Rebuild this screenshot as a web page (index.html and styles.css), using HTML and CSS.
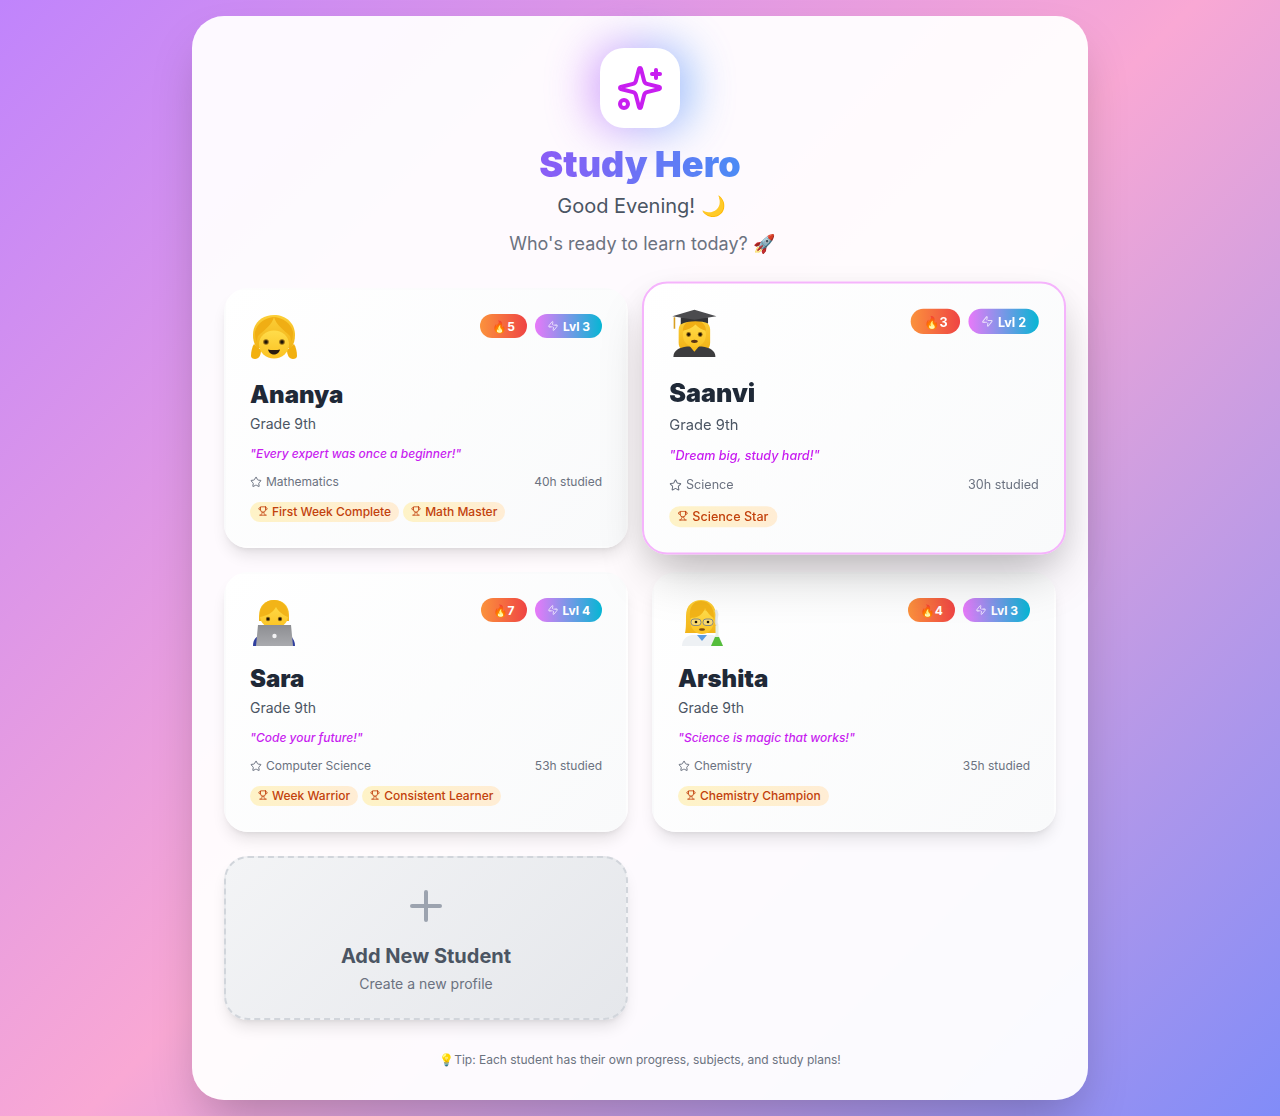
FILE: index.html
```html
<!DOCTYPE html>
<html lang="en">
<head>
<meta charset="utf-8">
<title>Study Hero</title>
<link rel="stylesheet" href="styles.css">
</head>
<body>
<svg class="defs" width="0" height="0" aria-hidden="true">
  <defs>
    <linearGradient id="g-skin" x1="0" y1="0" x2="0" y2="1"><stop offset="0" stop-color="#ffdc4a"/><stop offset="1" stop-color="#fbc222"/></linearGradient>
    <linearGradient id="g-hair" x1="0" y1="0" x2="0" y2="1"><stop offset="0" stop-color="#fccf38"/><stop offset="1" stop-color="#f2b418"/></linearGradient>
    <linearGradient id="g-lap" x1="0" y1="0" x2="0" y2="1"><stop offset="0" stop-color="#8d8e92"/><stop offset="1" stop-color="#a9aaae"/></linearGradient>
    <symbol id="i-zap" viewBox="0 0 24 24"><path d="M6.7 13.7H4a1 1 0 0 1-.8-1.6l7-8.8c.6-.8 1.8-.2 1.6.8L10.9 9"/><path d="M17.3 10.3H20a1 1 0 0 1 .8 1.6l-7 8.8c-.6.8-1.8.2-1.6-.8l.9-4.9"/><path d="M5 13.7h5.6"/><path d="M13.4 10.3H19"/></symbol>
    <symbol id="i-star" viewBox="0 0 24 24"><path d="M11.525 2.295a.53.53 0 0 1 .95 0l2.31 4.679a2.123 2.123 0 0 0 1.595 1.16l5.166.756a.53.53 0 0 1 .294.904l-3.736 3.638a2.123 2.123 0 0 0-.611 1.878l.882 5.14a.53.53 0 0 1-.771.56l-4.618-2.428a2.122 2.122 0 0 0-1.973 0L6.396 21.01a.53.53 0 0 1-.77-.56l.881-5.139a2.122 2.122 0 0 0-.611-1.879L2.16 9.795a.53.53 0 0 1 .294-.906l5.165-.755a2.122 2.122 0 0 0 1.597-1.16z"/></symbol>
    <symbol id="i-trophy" viewBox="0 0 24 24"><path d="M6 9H4.5a2.5 2.5 0 0 1 0-5H6"/><path d="M18 9h1.5a2.5 2.5 0 0 0 0-5H18"/><path d="M4 22h16"/><path d="M10 14.66V17c0 .55-.47.98-.97 1.21C7.85 18.75 7 20.24 7 22"/><path d="M14 14.66V17c0 .55.47.98.97 1.21C16.15 18.75 17 20.24 17 22"/><path d="M18 2H6v7a6 6 0 0 0 12 0V2Z"/></symbol>
  </defs>
</svg>
<main class="panel">
  <header class="hero">
    <div class="logo-wrap">
      <div class="logo">
        <svg viewBox="0 0 24 24" width="48" height="48" fill="none" stroke="#c81ef0" stroke-width="2" stroke-linecap="round" stroke-linejoin="round"><path d="M9.937 15.5A2 2 0 0 0 8.5 14.063l-6.135-1.582a.5.5 0 0 1 0-.962L8.5 9.936A2 2 0 0 0 9.937 8.5l1.582-6.135a.5.5 0 0 1 .963 0L14.063 8.5A2 2 0 0 0 15.5 9.937l6.135 1.581a.5.5 0 0 1 0 .964L15.5 14.063a2 2 0 0 0-1.437 1.437l-1.582 6.135a.5.5 0 0 1-.963 0z"/><path d="M20 3v4"/><path d="M22 5h-4"/><circle cx="4" cy="20" r="2"/></svg>
      </div>
    </div>
    <h1 class="title">Study Hero</h1>
    <p class="greet">Good Evening! 🌙</p>
    <p class="sub">Who's ready to learn today? 🚀</p>
  </header>
  <section class="grid">
    <article class="card">
      <div class="top">
        <svg class="avatar" viewBox="0 0 48 48">
          <path d="M4 30c-2 3-3 8-3 12 0 2 2 3 4 3 4 0 6-4 6-9z" fill="#f2b010"/>
          <path d="M44 30c2 3 3 8 3 12 0 2-2 3-4 3-4 0-6-4-6-9z" fill="#f2b010"/>
          <path d="M24 1C12 1 3 9 3 21c0 5 1 9 4 13h34c3-4 4-8 4-13C45 9 36 1 24 1z" fill="url(#g-hair)"/>
          <ellipse cx="24" cy="30.500" rx="15" ry="14" fill="url(#g-skin)"/>
          <path d="M24 3c-2 8-10 13-16 19-1 3-1 5-1 6-2-4-2-7-2-10C7 9 15 4 24 3c9 1 17 6 19 15 0 3 0 6-2 10 0-1 0-3-1-6-6-6-14-11-16-19z" fill="#f0ae14"/>
          <circle cx="16" cy="28" r="2.800" fill="#8a6416"/><circle cx="32" cy="28" r="2.800" fill="#8a6416"/>
          <circle cx="16" cy="28" r="1.700" fill="#1c1408"/><circle cx="32" cy="28" r="1.700" fill="#1c1408"/>
          <path d="M18 35.500c3 .8 9 .8 12 0-.5 3-3.500 5-6 5s-5.500-2-6-5z" fill="#2a1c10"/>
        </svg>
        <div class="badges"><span class="streak">🔥5</span><span class="level"><svg class="ic"><use href="#i-zap"/></svg>Lvl 3</span></div>
      </div>
      <h2 class="name">Ananya</h2><p class="grade">Grade 9th</p>
      <p class="quote">"Every expert was once a beginner!"</p>
      <div class="meta"><span class="subject"><svg class="ic"><use href="#i-star"/></svg>Mathematics</span><span>40h studied</span></div>
      <div class="tags"><span class="tag"><svg class="ic"><use href="#i-trophy"/></svg>First Week Complete</span><span class="tag"><svg class="ic"><use href="#i-trophy"/></svg>Math Master</span></div>
    </article>
    <article class="card active">
      <div class="top">
        <svg class="avatar" viewBox="0 0 48 48">
          <path d="M9 20c0-7 7-10 15-10s15 3 15 10v12c0 3-1 5-2 6H11c-1-1-2-3-2-6z" fill="url(#g-hair)"/>
          <path d="M4 46c0-6 5-9 13-10h14c8 1 13 4 13 10z" fill="#3c3c3e"/>
          <path d="M19 35l5 6 5-6z" fill="#f9bd1c"/>
          <ellipse cx="24" cy="25" rx="11" ry="11.500" fill="url(#g-skin)"/>
          <path d="M13 21c5-1 9-3 12-6 3 3 6 5 10 6 0-6-4-10-11-10s-11 4-11 10z" fill="#f0ae14"/>
          <circle cx="18.500" cy="24.500" r="2.300" fill="#8a6416"/><circle cx="29.500" cy="24.500" r="2.300" fill="#8a6416"/>
          <circle cx="18.500" cy="24.500" r="1.400" fill="#1c1408"/><circle cx="29.500" cy="24.500" r="1.400" fill="#1c1408"/>
          <ellipse cx="24" cy="31" rx="3.200" ry="1.500" fill="#5b3414"/>
          <path d="M11 8h26v6c-6-3-20-3-26 1z" fill="#333335"/>
          <path d="M24 1 45 7 24 10.500 3 7z" fill="#4b4b4e"/>
          <path d="M5 8v11" stroke="#d9a023" stroke-width="1.500" fill="none"/>
        </svg>
        <div class="badges"><span class="streak">🔥3</span><span class="level"><svg class="ic"><use href="#i-zap"/></svg>Lvl 2</span></div>
      </div>
      <h2 class="name">Saanvi</h2><p class="grade">Grade 9th</p>
      <p class="quote">"Dream big, study hard!"</p>
      <div class="meta"><span class="subject"><svg class="ic"><use href="#i-star"/></svg>Science</span><span>30h studied</span></div>
      <div class="tags"><span class="tag"><svg class="ic"><use href="#i-trophy"/></svg>Science Star</span></div>
    </article>
    <article class="card">
      <div class="top">
        <svg class="avatar" viewBox="0 0 48 48">
          <path d="M3 48c0-6 3-10 8-11h26c5 1 8 5 8 11z" fill="#2f3e9e"/>
          <path d="M9 18C9 7 16 2 24 2s15 5 15 15v6H9z" fill="url(#g-hair)"/>
          <ellipse cx="24" cy="18" rx="14" ry="12.500" fill="url(#g-skin)"/>
          <path d="M10 19c6-1 13-4 16-10 2 4 7 8 12 10C39 8 32 2 24 2S9 8 10 19z" fill="#f2b418"/>
          <circle cx="18" cy="21" r="2.200" fill="#8a6416"/><circle cx="30" cy="21" r="2.200" fill="#8a6416"/>
          <circle cx="18" cy="21" r="1.300" fill="#1c1408"/><circle cx="30" cy="21" r="1.300" fill="#1c1408"/>
          <path d="M8 27h33l2 21H6z" fill="url(#g-lap)"/>
          <circle cx="24.500" cy="38" r="2.200" fill="#f2f2f4"/>
        </svg>
        <div class="badges"><span class="streak">🔥7</span><span class="level"><svg class="ic"><use href="#i-zap"/></svg>Lvl 4</span></div>
      </div>
      <h2 class="name">Sara</h2><p class="grade">Grade 9th</p>
      <p class="quote">"Code your future!"</p>
      <div class="meta"><span class="subject"><svg class="ic"><use href="#i-star"/></svg>Computer Science</span><span>53h studied</span></div>
      <div class="tags"><span class="tag"><svg class="ic"><use href="#i-trophy"/></svg>Week Warrior</span><span class="tag"><svg class="ic"><use href="#i-trophy"/></svg>Consistent Learner</span></div>
    </article>
    <article class="card">
      <div class="top">
        <svg class="avatar" viewBox="0 0 48 48">
          <path d="M8 18C8 7 15 2 23 2c9 0 15 6 15 16 0 8 1 13 2 17H7c1-4 1-9 1-17z" fill="url(#g-hair)"/>
          <path d="M4 48c0-6 4-10 10-11h20c6 1 10 5 10 11z" fill="#eef1f4"/>
          <path d="M19 37l5 6 5-6z" fill="#5b9be0"/>
          <ellipse cx="24" cy="24" rx="11.500" ry="12" fill="url(#g-skin)"/>
          <path d="M12 20c7 0 13-3 15-10 2 4 5 8 9 10C36 9 31 3 23 3S11 9 12 20z" fill="#f2b418"/>
          <g fill="#f4f6f8" fill-opacity=".3" stroke="#7d8187" stroke-width=".9"><rect x="13" y="21" width="10" height="6.500" rx="3"/><rect x="25" y="21" width="10" height="6.500" rx="3"/></g>
          <circle cx="18" cy="24" r="1.300" fill="#1c1408"/><circle cx="30" cy="24" r="1.300" fill="#1c1408"/>
          <ellipse cx="24" cy="31.500" rx="3" ry="1.200" fill="#7a4a14"/>
          <path d="M38 13c3 5-2 8 1 14" stroke="#dfe3e6" stroke-width="3" fill="none" stroke-linecap="round" stroke-opacity=".8"/>
          <path d="M37.500 28h3v9l4.500 11H33l4.500-11z" fill="#e6eee4"/>
          <path d="M37 39h4l4 9H33z" fill="#55bd3c"/>
        </svg>
        <div class="badges"><span class="streak">🔥4</span><span class="level"><svg class="ic"><use href="#i-zap"/></svg>Lvl 3</span></div>
      </div>
      <h2 class="name">Arshita</h2><p class="grade">Grade 9th</p>
      <p class="quote">"Science is magic that works!"</p>
      <div class="meta"><span class="subject"><svg class="ic"><use href="#i-star"/></svg>Chemistry</span><span>35h studied</span></div>
      <div class="tags"><span class="tag"><svg class="ic"><use href="#i-trophy"/></svg>Chemistry Champion</span></div>
    </article>
    <article class="card add">
      <svg class="plus" viewBox="0 0 24 24" width="48" height="48" fill="none" stroke="#9ca3af" stroke-width="2" stroke-linecap="round"><path d="M5 12h14"/><path d="M12 5v14"/></svg>
      <h2 class="add-title">Add New Student</h2>
      <p class="add-sub">Create a new profile</p>
    </article>
  </section>
  <p class="tip">💡Tip: Each student has their own progress, subjects, and study plans!</p>
</main>
</body>
</html>
```
FILE: styles.css
```css
* { box-sizing: border-box; margin: 0; padding: 0; }
html, body { height: 100%; }
body {
  font-family: Inter, sans-serif;
  padding: 16px;
  background: linear-gradient(135deg, #c084fc 0%, #f9a8d4 50%, #818cf8 100%);
}
.defs { position: absolute; }
.panel {
  width: 896px;
  margin: 0 auto;
  padding: 32px;
  background: rgba(255, 255, 255, .95);
  border-radius: 32px;
  box-shadow: 0 25px 50px -12px rgba(0, 0, 0, .25);
}
.hero { text-align: center; margin-bottom: 30px; }
.logo-wrap { position: relative; width: 80px; height: 80px; margin: 0 auto 16px; }
.logo-wrap::before {
  content: "";
  position: absolute;
  inset: -4px -10px;
  border-radius: 32px;
  background: linear-gradient(90deg, #c56bfa 15%, #4f9bfa 85%);
  filter: blur(22px);
  opacity: .6;
}
.logo {
  position: relative;
  width: 80px;
  height: 80px;
  background: #fff;
  border-radius: 24px;
  display: flex;
  align-items: center;
  justify-content: center;
}
.title {
  width: fit-content;
  margin: 0 auto 8px;
  font-size: 36px;
  line-height: 40px;
  font-weight: 900;
  background: linear-gradient(90deg, #8b5cf6, #4b8bf5);
  -webkit-background-clip: text;
  background-clip: text;
  color: transparent;
}
.greet { font-size: 20px; line-height: 28px; font-weight: 400; color: #4b5563; margin-bottom: 10px; padding-left: 3px; }
.sub { font-size: 18px; line-height: 28px; color: #6b7280; padding-left: 4px; }
.grid { display: grid; grid-template-columns: 1fr 1fr; gap: 24px; }
.card {
  padding: 24px;
  border: 2px solid transparent;
  border-radius: 24px;
  background: linear-gradient(135deg, #fff, #f9fafb);
  box-shadow: 0 10px 15px -3px rgba(0, 0, 0, .1), 0 4px 6px -4px rgba(0, 0, 0, .1);
}
.active {
  transform: scale(1.05);
  border-color: #f5b4fc;
  box-shadow: 0 25px 50px -12px rgba(0, 0, 0, .25), 0 10px 30px rgba(0, 0, 0, .07);
}
.top { display: flex; justify-content: space-between; align-items: flex-start; margin-bottom: 17px; }
.avatar { width: 48px; height: 48px; display: block; }
.badges { display: flex; gap: 8px; }
.streak, .level {
  display: inline-flex;
  align-items: center;
  height: 24px;
  padding: 0 12px;
  border-radius: 999px;
  font-size: 12px;
  font-weight: 700;
  color: #fff;
}
.streak { background: linear-gradient(90deg, #fb923c, #ef4444); }
.level { background: linear-gradient(90deg, #e879f9, #06b6d4); gap: 4px; }
.ic { width: 12px; height: 12px; fill: none; stroke: currentColor; stroke-width: 2; stroke-linecap: round; stroke-linejoin: round; flex: none; }
.level .ic { opacity: .7; }
.name { font-size: 24px; line-height: 32px; font-weight: 900; color: #1f2937; margin-bottom: 3px; }
.grade { font-size: 14px; line-height: 20px; color: #4b5563; margin-bottom: 12px; }
.quote { font-size: 12px; line-height: 16px; font-style: italic; font-weight: 500; color: #c81ef0; margin-bottom: 12px; }
.meta { display: flex; justify-content: space-between; align-items: center; font-size: 12px; line-height: 16px; color: #6b7280; margin-bottom: 12px; }
.subject { display: inline-flex; align-items: center; gap: 4px; }
.tags { display: flex; flex-wrap: wrap; gap: 4px; }
.tag {
  display: inline-flex;
  align-items: center;
  gap: 4px;
  height: 20px;
  padding: 0 8px 2px;
  border-radius: 999px;
  font-size: 12px;
  font-weight: 500;
  color: #c2410c;
  background: linear-gradient(90deg, #fef3c7, #ffedd5);
}
.tag .ic { width: 10px; height: 10px; }
.add {
  display: flex;
  flex-direction: column;
  align-items: center;
  border: 2px dashed #d1d5db;
  background: linear-gradient(135deg, #f3f4f6, #e5e7eb);
  text-align: center;
}
.plus { margin-bottom: 12px; }
.add-title { font-size: 20px; line-height: 28px; font-weight: 700; color: #4b5563; margin-bottom: 4px; }
.add-sub { font-size: 14px; line-height: 20px; color: #6b7280; }
.tip { margin-top: 32px; text-align: center; font-size: 12px; line-height: 16px; color: #6b7280; }
```
